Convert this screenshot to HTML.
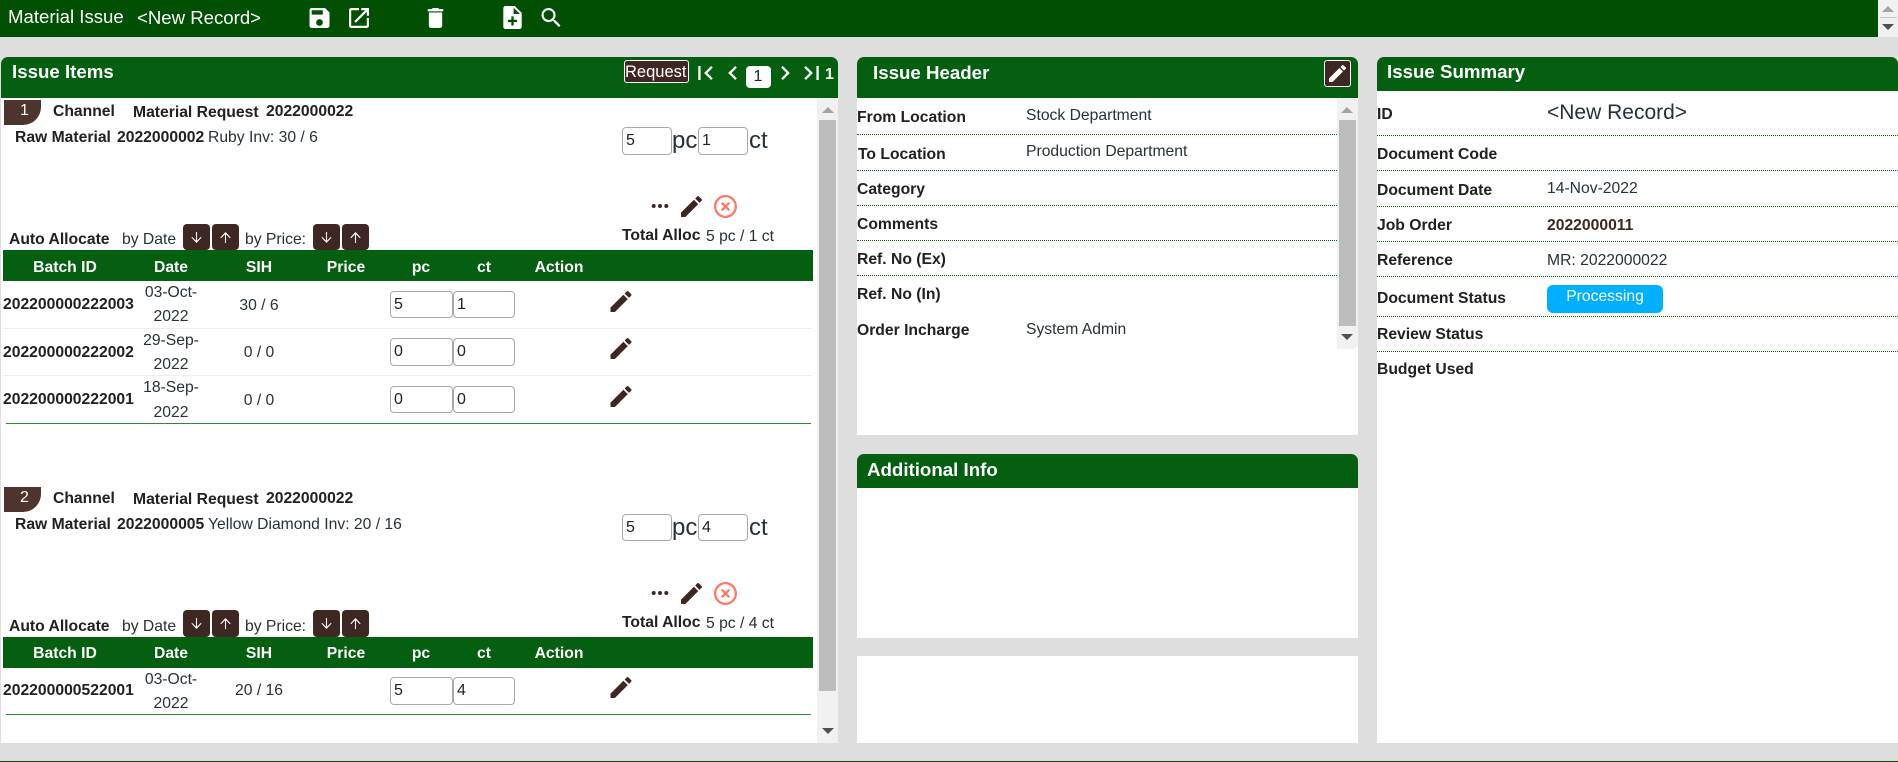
<!DOCTYPE html>
<html><head><meta charset="utf-8"><title>Material Issue</title>
<style>
html,body{margin:0;padding:0;width:1898px;height:762px;overflow:hidden;background:#dedede;font-family:"Liberation Sans",Arial,sans-serif;color:#263238;font-size:15.7px}
.b{position:absolute;display:block}
.t{position:absolute;white-space:nowrap;line-height:24px;margin-top:-11px}
.s{font-weight:bold;color:#212121}
.w{color:#fff}
.c{transform:translateX(-50%)}
.h{font-weight:bold;color:#fff;font-size:18.7px;margin-top:-12px}
.g{background:#045f10}
.d{position:absolute;height:0;border-top:1px dotted #045f10}
input{position:absolute;box-sizing:border-box;border:1px solid #a9a9a9;border-radius:4px;background:#fff;padding:0 3px;margin:0;font:16px "Liberation Sans",Arial,sans-serif;color:#212121;outline:0}
svg.i{position:absolute;display:block}
.sb{position:absolute;background:#f1f1f1}
.th{position:absolute;background:#bdbdbd}
.up,.dn{position:absolute;width:0;height:0;border-left:6px solid transparent;border-right:6px solid transparent}
.up{border-bottom:6px solid #a3a3a3}
.dn{border-top:6px solid #505050}
.btn{position:absolute;background:#3e2723;border-radius:4px}
.bdg{position:absolute;width:37px;height:25px;background:#4e342e;border-bottom-right-radius:18px}
</style></head><body>
<svg width="0" height="0" style="position:absolute"><defs>
<symbol id="save" viewBox="3 3 18 18"><path d="M17 3H5c-1.11 0-2 .9-2 2v14c0 1.1.89 2 2 2h14c1.1 0 2-.9 2-2V7l-4-4zm-5 16c-1.66 0-3-1.34-3-3s1.34-3 3-3 3 1.34 3 3-1.34 3-3 3zm3-10H5V5h10v4z"/></symbol>
<symbol id="open" viewBox="3 3 18 18"><path d="M19 19H5V5h7V3H5c-1.11 0-2 .9-2 2v14c0 1.1.89 2 2 2h14c1.1 0 2-.9 2-2v-7h-2v7zM14 3v2h3.59l-9.83 9.83 1.41 1.41L19 6.41V10h2V3h-7z"/></symbol>
<symbol id="del" viewBox="5 3 14 18"><path d="M6 19c0 1.1.9 2 2 2h8c1.1 0 2-.9 2-2V7H6v12zM19 4h-3.5l-1-1h-5l-1 1H5v2h14V4z"/></symbol>
<symbol id="add" viewBox="4 2 16 20"><path d="M14 2H6c-1.1 0-1.99.9-1.99 2L4 20c0 1.1.89 2 1.99 2H18c1.1 0 2-.9 2-2V8l-6-6zm2 14h-3v3h-2v-3H8v-2h3v-3h2v3h3v2zm-3-7V3.5L18.5 9H13z"/></symbol>
<symbol id="srch" viewBox="3 3 17.5 17.5"><path d="M15.5 14h-.79l-.28-.27C15.41 12.59 16 11.11 16 9.5 16 5.91 13.09 3 9.5 3S3 5.91 3 9.5 5.91 16 9.5 16c1.61 0 3.09-.59 4.23-1.57l.27.28v.79l5 4.99L20.49 19l-4.99-5zm-6 0C7.01 14 5 11.99 5 9.5S7.01 5 9.5 5 14 7.01 14 9.5 11.99 14 9.5 14z"/></symbol>
<symbol id="edit" viewBox="3 3 18 18"><path d="M3 17.25V21h3.75L17.81 9.94l-3.75-3.75L3 17.25zM20.71 7.04c.39-.39.39-1.02 0-1.41l-2.34-2.34c-.39-.39-1.02-.39-1.41 0l-1.83 1.83 3.75 3.75 1.83-1.83z"/></symbol>
<symbol id="off" viewBox="2 2 20 20"><path d="M14.59 8L12 10.59 9.41 8 8 9.41 10.59 12 8 14.59 9.41 16 12 13.41 14.59 16 16 14.59 13.41 12 16 9.41 14.59 8zM12 2C6.47 2 2 6.47 2 12s4.47 10 10 10 10-4.47 10-10S17.53 2 12 2zm0 18c-4.41 0-8-3.59-8-8s3.59-8 8-8 8 3.59 8 8-3.59 8-8 8z"/></symbol>
<symbol id="dots" viewBox="0 0 20 6"><circle cx="3" cy="3" r="2.2"/><circle cx="10" cy="3" r="2.2"/><circle cx="17" cy="3" r="2.2"/></symbol>
<symbol id="first" viewBox="6 6 12.41 12"><path d="M18.41 16.59L13.82 12l4.59-4.59L17 6l-6 6 6 6zM6 6h2v12H6z"/></symbol>
<symbol id="left" viewBox="8 6 7.41 12"><path d="M15.41 7.41L14 6l-6 6 6 6 1.41-1.41L10.83 12z"/></symbol>
<symbol id="right" viewBox="8.59 6 7.41 12"><path d="M10 6L8.59 7.41 13.17 12l-4.58 4.59L10 18l6-6z"/></symbol>
<symbol id="last" viewBox="5.59 6 12.41 12"><path d="M5.59 7.41L10.18 12l-4.59 4.59L7 18l6-6-6-6zM16 6h2v12h-2z"/></symbol>
<symbol id="dnar" viewBox="4 4 16 16"><path d="M19.4 12l-1-1L12.8 16.6V4h-1.6v12.6L5.6 11l-1 1 7.4 8z"/></symbol>
<symbol id="upar" viewBox="4 4 16 16"><path d="M4.6 12l1 1L11.2 7.4V20h1.6V7.4l5.6 5.6 1-1L12 4z"/></symbol>
</defs></svg>

<!-- top bar -->
<div class="b" style="left:0;top:0;width:1898px;height:37px;background:#004f03"></div>
<span class="t w" style="left:8px;top:16px;font-size:18.6px">Material Issue</span>
<span class="t w" style="left:137px;top:17px;font-size:18.6px">&lt;New Record&gt;</span>
<svg class="i" fill="#fff" style="left:309px;top:8px" width="21" height="20"><use href="#save"/></svg>
<svg class="i" fill="#fff" style="left:348px;top:8px" width="22" height="20"><use href="#open"/></svg>
<svg class="i" fill="#fff" style="left:427px;top:8px" width="17" height="20"><use href="#del"/></svg>
<svg class="i" fill="#fff" style="left:503px;top:6px" width="19" height="23"><use href="#add"/></svg>
<svg class="i" fill="#fff" style="left:541px;top:8px" width="20" height="19"><use href="#srch"/></svg>
<div class="sb" style="left:1878px;top:0;width:20px;height:37px"></div>
<div class="b" style="left:1880px;top:17px;width:17px;height:1px;background:#c8c8c8"></div>
<div class="up" style="left:1882px;top:6px"></div>
<div class="dn" style="left:1882px;top:24px"></div>

<!-- panels -->
<div class="b" style="left:1px;top:57px;width:837px;height:686px;background:#fff;border-radius:7px 7px 0 0;overflow:hidden"><div class="g" style="height:41px"></div></div>
<div class="b" style="left:857px;top:57px;width:501px;height:378px;background:#fff;border-radius:7px 7px 0 0;overflow:hidden"><div class="g" style="height:41px"></div></div>
<div class="b" style="left:857px;top:454px;width:501px;height:184px;background:#fff;border-radius:7px 7px 0 0;overflow:hidden"><div class="g" style="height:34px"></div></div>
<div class="b" style="left:857px;top:656px;width:501px;height:87px;background:#fff"></div>
<div class="b" style="left:1377px;top:57px;width:521px;height:686px;background:#fff;border-radius:7px 7px 0 0;overflow:hidden"><div class="g" style="height:34px"></div></div>
<div class="b" style="left:0;top:761px;width:1898px;height:1px;background:#0a4d10"></div>

<!-- left header -->
<span class="t h" style="left:12px;top:72px">Issue Items</span>
<div class="b" style="left:624px;top:60px;width:65px;height:23px;box-sizing:border-box;background:#3e2723;border:1px solid #fff;border-radius:3px"></div>
<span class="t w" style="left:625px;top:71px;font-size:16.5px">Request</span>
<svg class="i" fill="#fff" style="left:698px;top:66px" width="15" height="14"><use href="#first"/></svg>
<svg class="i" fill="#fff" style="left:728px;top:66px" width="9" height="14"><use href="#left"/></svg>
<div class="b" style="left:746px;top:66px;width:25px;height:22px;background:#fff;border-radius:4px"></div>
<span class="t c" style="left:758px;top:76px;font-size:16px;color:#212121">1</span>
<svg class="i" fill="#fff" style="left:781px;top:66px" width="9" height="14"><use href="#right"/></svg>
<svg class="i" fill="#fff" style="left:804px;top:66px" width="15" height="14"><use href="#last"/></svg>
<span class="t w" style="left:825px;top:74px;font-size:16px;font-weight:bold">1</span>

<!-- left scrollbar -->
<div class="sb" style="left:817px;top:99px;width:21px;height:644px"></div>
<div class="th" style="left:819px;top:120px;width:17px;height:571px"></div>
<div class="up" style="left:822px;top:107px"></div>
<div class="dn" style="left:822px;top:728px"></div>

<!-- item 1 -->
<div class="bdg" style="left:4px;top:100px"></div>
<span class="t w" style="left:18px;top:110px;font-size:16px;margin-left:2px">1</span>
<span class="t s" style="left:53px;top:111px">Channel</span>
<span class="t s" style="left:133px;top:112px">Material Request</span>
<span class="t s" style="left:266px;top:111px">2022000022</span>
<span class="t s" style="left:15px;top:137px">Raw Material</span>
<span class="t s" style="left:117px;top:137px">2022000002</span>
<span class="t" style="left:208px;top:137px">Ruby Inv: 30 / 6</span>
<input style="left:622px;top:127px;width:50px;height:28px" value="5">
<span class="t" style="left:672px;top:140px;font-size:24px">pc</span>
<input style="left:698px;top:127px;width:50px;height:28px" value="1">
<span class="t" style="left:749px;top:140px;font-size:24px">ct</span>
<svg class="i" fill="#3e2723" style="left:651px;top:203px" width="18" height="6"><use href="#dots"/></svg>
<svg class="i" fill="#3e2723" style="left:681px;top:196px" width="21" height="21"><use href="#edit"/></svg>
<svg class="i" fill="#ff7a66" style="left:714px;top:195px" width="23" height="23"><use href="#off"/></svg>
<span class="t s" style="left:622px;top:235px">Total Alloc</span>
<span class="t" style="left:706px;top:236px">5 pc / 1 ct</span>
<span class="t s" style="left:9px;top:239px">Auto Allocate</span>
<span class="t" style="left:122px;top:239px">by Date</span>
<div class="btn" style="left:183px;top:224px;width:27px;height:26px"></div>
<svg class="i" fill="#fff" style="left:191px;top:232px" width="11" height="11"><use href="#dnar"/></svg>
<div class="btn" style="left:212px;top:224px;width:27px;height:26px"></div>
<svg class="i" fill="#fff" style="left:220px;top:232px" width="11" height="11"><use href="#upar"/></svg>
<span class="t" style="left:245px;top:239px">by Price:</span>
<div class="btn" style="left:313px;top:224px;width:27px;height:26px"></div>
<svg class="i" fill="#fff" style="left:321px;top:232px" width="11" height="11"><use href="#dnar"/></svg>
<div class="btn" style="left:342px;top:224px;width:27px;height:26px"></div>
<svg class="i" fill="#fff" style="left:350px;top:232px" width="11" height="11"><use href="#upar"/></svg>

<div class="b g" style="left:3px;top:250px;width:810px;height:31px"></div>
<span class="t s w c" style="left:65px;top:267px;color:#fff">Batch ID</span>
<span class="t s c" style="left:171px;top:267px;color:#fff">Date</span>
<span class="t s c" style="left:259px;top:267px;color:#fff">SIH</span>
<span class="t s c" style="left:346px;top:267px;color:#fff">Price</span>
<span class="t s c" style="left:421px;top:267px;color:#fff">pc</span>
<span class="t s c" style="left:484px;top:267px;color:#fff">ct</span>
<span class="t s c" style="left:559px;top:267px;color:#fff">Action</span>

<span class="t s" style="left:3px;top:304px">202200000222003</span>
<span class="t c" style="left:171px;top:292px">03-Oct-</span>
<span class="t c" style="left:171px;top:316px">2022</span>
<span class="t c" style="left:259px;top:305px">30 / 6</span>
<input style="left:390px;top:291px;width:63px;height:27px" value="5">
<input style="left:453px;top:291px;width:62px;height:27px" value="1">
<svg class="i" fill="#3e2723" style="left:610px;top:291px" width="22" height="21"><use href="#edit"/></svg>
<div class="b" style="left:3px;top:328px;width:810px;height:1px;background:#eee"></div>

<span class="t s" style="left:3px;top:352px">202200000222002</span>
<span class="t c" style="left:171px;top:340px">29-Sep-</span>
<span class="t c" style="left:171px;top:364px">2022</span>
<span class="t c" style="left:259px;top:352px">0 / 0</span>
<input style="left:390px;top:338px;width:63px;height:28px" value="0">
<input style="left:453px;top:338px;width:62px;height:28px" value="0">
<svg class="i" fill="#3e2723" style="left:610px;top:338px" width="22" height="21"><use href="#edit"/></svg>
<div class="b" style="left:3px;top:375px;width:810px;height:1px;background:#eee"></div>

<span class="t s" style="left:3px;top:399px">202200000222001</span>
<span class="t c" style="left:171px;top:387px">18-Sep-</span>
<span class="t c" style="left:171px;top:412px">2022</span>
<span class="t c" style="left:259px;top:400px">0 / 0</span>
<input style="left:390px;top:386px;width:63px;height:27px" value="0">
<input style="left:453px;top:386px;width:62px;height:27px" value="0">
<svg class="i" fill="#3e2723" style="left:610px;top:386px" width="22" height="21"><use href="#edit"/></svg>
<div class="b" style="left:6px;top:423px;width:805px;height:1px;background:#2e8b2e"></div>

<!-- item 2 -->
<div class="bdg" style="left:4px;top:487px"></div>
<span class="t w" style="left:18px;top:497px;font-size:16px;margin-left:2px">2</span>
<span class="t s" style="left:53px;top:498px">Channel</span>
<span class="t s" style="left:133px;top:499px">Material Request</span>
<span class="t s" style="left:266px;top:498px">2022000022</span>
<span class="t s" style="left:15px;top:524px">Raw Material</span>
<span class="t s" style="left:117px;top:524px">2022000005</span>
<span class="t" style="left:208px;top:524px">Yellow Diamond Inv: 20 / 16</span>
<input style="left:622px;top:514px;width:50px;height:27px" value="5">
<span class="t" style="left:672px;top:527px;font-size:24px">pc</span>
<input style="left:698px;top:514px;width:50px;height:27px" value="4">
<span class="t" style="left:749px;top:527px;font-size:24px">ct</span>
<svg class="i" fill="#3e2723" style="left:651px;top:590px" width="18" height="6"><use href="#dots"/></svg>
<svg class="i" fill="#3e2723" style="left:681px;top:583px" width="21" height="21"><use href="#edit"/></svg>
<svg class="i" fill="#ff7a66" style="left:714px;top:582px" width="23" height="23"><use href="#off"/></svg>
<span class="t s" style="left:622px;top:622px">Total Alloc</span>
<span class="t" style="left:706px;top:623px">5 pc / 4 ct</span>
<span class="t s" style="left:9px;top:626px">Auto Allocate</span>
<span class="t" style="left:122px;top:626px">by Date</span>
<div class="btn" style="left:183px;top:610px;width:27px;height:27px"></div>
<svg class="i" fill="#fff" style="left:191px;top:618px" width="11" height="11"><use href="#dnar"/></svg>
<div class="btn" style="left:212px;top:610px;width:27px;height:27px"></div>
<svg class="i" fill="#fff" style="left:220px;top:618px" width="11" height="11"><use href="#upar"/></svg>
<span class="t" style="left:245px;top:626px">by Price:</span>
<div class="btn" style="left:313px;top:610px;width:27px;height:27px"></div>
<svg class="i" fill="#fff" style="left:321px;top:618px" width="11" height="11"><use href="#dnar"/></svg>
<div class="btn" style="left:342px;top:610px;width:27px;height:27px"></div>
<svg class="i" fill="#fff" style="left:350px;top:618px" width="11" height="11"><use href="#upar"/></svg>

<div class="b g" style="left:3px;top:637px;width:810px;height:31px"></div>
<span class="t s c" style="left:65px;top:653px;color:#fff">Batch ID</span>
<span class="t s c" style="left:171px;top:653px;color:#fff">Date</span>
<span class="t s c" style="left:259px;top:653px;color:#fff">SIH</span>
<span class="t s c" style="left:346px;top:653px;color:#fff">Price</span>
<span class="t s c" style="left:421px;top:653px;color:#fff">pc</span>
<span class="t s c" style="left:484px;top:653px;color:#fff">ct</span>
<span class="t s c" style="left:559px;top:653px;color:#fff">Action</span>
<span class="t s" style="left:3px;top:690px">202200000522001</span>
<span class="t c" style="left:171px;top:679px">03-Oct-</span>
<span class="t c" style="left:171px;top:703px">2022</span>
<span class="t c" style="left:259px;top:690px">20 / 16</span>
<input style="left:390px;top:677px;width:63px;height:28px" value="5">
<input style="left:453px;top:677px;width:62px;height:28px" value="4">
<svg class="i" fill="#3e2723" style="left:610px;top:677px" width="22" height="21"><use href="#edit"/></svg>
<div class="b" style="left:6px;top:714px;width:805px;height:1px;background:#2e8b2e"></div>

<!-- middle -->
<span class="t h" style="left:873px;top:73px">Issue Header</span>
<div class="b" style="left:1324px;top:60px;width:27px;height:27px;box-sizing:border-box;background:#3e2723;border:1px solid #fff;border-radius:3px"></div>
<svg class="i" fill="#fff" style="left:1329px;top:65px" width="17" height="17"><use href="#edit"/></svg>
<div class="sb" style="left:1337px;top:99px;width:21px;height:250px;border-bottom-right-radius:6px"></div>
<div class="th" style="left:1339px;top:120px;width:17px;height:206px"></div>
<div class="up" style="left:1341px;top:107px"></div>
<div class="dn" style="left:1341px;top:334px"></div>
<span class="t s" style="left:857px;top:117px">From Location</span><span class="t" style="left:1026px;top:115px">Stock Department</span>
<div class="d" style="left:857px;top:134px;width:480px"></div>
<span class="t s" style="left:858px;top:154px">To Location</span><span class="t" style="left:1026px;top:151px">Production Department</span>
<div class="d" style="left:857px;top:170px;width:480px"></div>
<span class="t s" style="left:857px;top:189px">Category</span>
<div class="d" style="left:857px;top:205px;width:480px"></div>
<span class="t s" style="left:857px;top:224px">Comments</span>
<div class="d" style="left:857px;top:240px;width:480px"></div>
<span class="t s" style="left:857px;top:259px">Ref. No (Ex)</span>
<div class="d" style="left:857px;top:275px;width:480px"></div>
<span class="t s" style="left:857px;top:294px">Ref. No (In)</span>
<span class="t s" style="left:857px;top:330px">Order Incharge</span><span class="t" style="left:1026px;top:329px">System Admin</span>

<span class="t h" style="left:867px;top:470px">Additional Info</span>

<!-- right -->
<span class="t h" style="left:1387px;top:72px">Issue Summary</span>
<span class="t s" style="left:1377px;top:114px">ID</span><span class="t" style="left:1547px;top:112px;font-size:21px">&lt;New Record&gt;</span>
<div class="d" style="left:1377px;top:135px;width:521px"></div>
<span class="t s" style="left:1377px;top:154px">Document Code</span>
<div class="d" style="left:1377px;top:170px;width:521px"></div>
<span class="t s" style="left:1377px;top:190px">Document Date</span><span class="t" style="left:1547px;top:188px">14-Nov-2022</span>
<div class="d" style="left:1377px;top:206px;width:521px"></div>
<span class="t s" style="left:1377px;top:225px">Job Order</span><span class="t s" style="left:1547px;top:225px;color:#3e2723">2022000011</span>
<div class="d" style="left:1377px;top:241px;width:521px"></div>
<span class="t s" style="left:1377px;top:260px">Reference</span><span class="t" style="left:1547px;top:260px">MR: 2022000022</span>
<div class="d" style="left:1377px;top:276px;width:521px"></div>
<span class="t s" style="left:1377px;top:298px">Document Status</span>
<div class="b" style="left:1547px;top:285px;width:116px;height:28px;background:#00b0ff;border-radius:6px"></div>
<span class="t w c" style="left:1605px;top:296px">Processing</span>
<div class="d" style="left:1377px;top:316px;width:521px"></div>
<span class="t s" style="left:1377px;top:334px">Review Status</span>
<div class="d" style="left:1377px;top:351px;width:521px"></div>
<span class="t s" style="left:1377px;top:369px">Budget Used</span>
</body></html>
